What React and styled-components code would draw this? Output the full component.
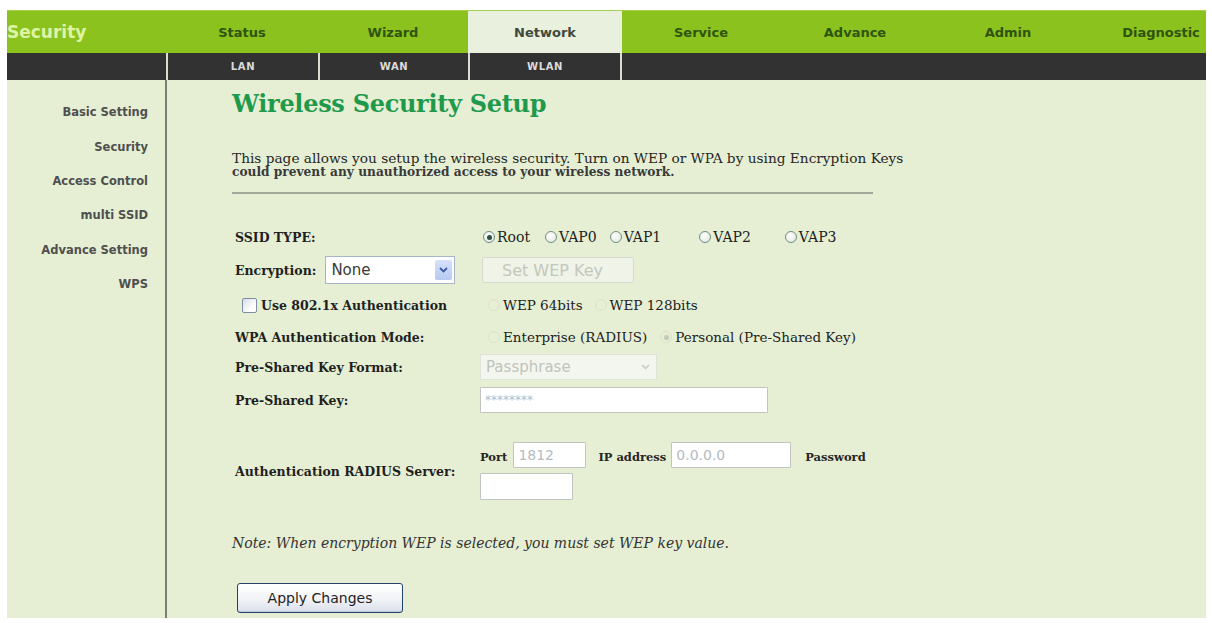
import React from 'react';
import styled, { createGlobalStyle } from 'styled-components';

const Global = createGlobalStyle`
  html, body { margin: 0; padding: 0; background: #ffffff; }
  body { font-family: "DejaVu Serif", serif; color: #222; }
  * { box-sizing: border-box; }
`;

const Page = styled.div`
  width: 1199px;
  margin: 10px 0 0 7px;
  overflow: hidden;
`;

const COLS = '159px 152px 150px 154px 158px 150px 156px 150px';

const TopNav = styled.div`
  display: grid;
  grid-template-columns: ${COLS};
  height: 43px;
  background: #8cc21d;
  border-top: 1px solid #a6d04e;
`;

const Logo = styled.div`
  display: flex;
  align-items: center;
  font-family: "DejaVu Sans", sans-serif;
  font-weight: bold;
  font-size: 17px;
  color: #def4a4;
`;

const NavTab = styled.div`
  display: flex;
  align-items: center;
  justify-content: center;
  font-family: "DejaVu Sans", sans-serif;
  font-weight: bold;
  font-size: 13px;
  color: ${p => (p.$active ? '#3f4a3c' : '#2f5410')};
  background: ${p => (p.$active ? '#e9f0dd' : 'transparent')};
  white-space: nowrap;
`;

const SubNav = styled.div`
  display: grid;
  grid-template-columns: 159px 152px 150px 152px 1fr;
  height: 27px;
  background: #323232;
`;

const SubTab = styled.div`
  display: flex;
  align-items: center;
  justify-content: center;
  border-left: ${p => (p.$first ? 'none' : '2px solid #d9ddd0')};
  font-family: "DejaVu Sans", sans-serif;
  font-weight: bold;
  font-size: 10px;
  letter-spacing: 0.6px;
  color: #dcdcdc;
`;

const Body = styled.div`
  display: flex;
  height: 538px;
  background: #e6efd4;
`;

const Sidebar = styled.nav`
  width: 160px;
  flex: none;
  border-right: 2px solid #7c7e74;
  padding: 15px 17px 0 0;
  display: flex;
  flex-direction: column;
  align-items: flex-end;
`;

const SideItem = styled.div`
  height: 34.4px;
  display: flex;
  align-items: center;
  font-family: "DejaVu Sans", sans-serif;
  font-weight: bold;
  font-size: 11.5px;
  color: #4f4f4f;
  white-space: nowrap;
`;

const Main = styled.main`
  flex: 1;
  padding: 10px 0 0 65px;
`;

const Title = styled.h1`
  margin: 0;
  font-family: "DejaVu Serif", serif;
  font-weight: bold;
  font-size: 24px;
  line-height: 28px;
  color: #1f9a4c;
  letter-spacing: -0.3px;
`;

const Intro = styled.p`
  margin: 33px 0 0;
  font-size: 13.7px;
  line-height: 14px;
  color: #262626;
  white-space: nowrap;
`;

const IntroSmall = styled.span`
  display: block;
  font-size: 12.2px;
  font-weight: bold;
  color: #3a3a3a;
`;

const Rule = styled.div`
  width: 641px;
  height: 2px;
  margin-top: 13px;
  background: #a2a797;
`;

const Form = styled.div`
  margin: 28px 0 0 3px;
`;

const Row = styled.div`
  display: grid;
  grid-template-columns: 245px 1fr;
  align-items: center;
  height: ${p => p.$h}px;
  margin-top: ${p => p.$mt || 0}px;
`;

const Label = styled.div`
  display: flex;
  align-items: center;
  font-weight: bold;
  font-size: 12.5px;
  color: #1f1f1f;
  white-space: nowrap;
  padding-left: ${p => p.$indent || 0}px;
`;

const Value = styled.div`
  display: flex;
  align-items: center;
  white-space: nowrap;
  padding-left: ${p => p.$pl || 0}px;
`;

const Choice = styled.label`
  display: inline-flex;
  align-items: center;
  gap: ${p => p.$gap ?? 2}px;
  margin-right: ${p => p.$mr || 0}px;
  font-size: ${p => p.$fs || 13.5}px;
  color: #222;
`;

const RadioDot = styled.span`
  width: 12px;
  height: 12px;
  border-radius: 50%;
  flex: none;
  display: inline-flex;
  align-items: center;
  justify-content: center;
  border: 1px solid ${p => (p.$disabled ? '#dae2cd' : '#6f8f84')};
  background: ${p => (p.$disabled ? 'transparent' : 'radial-gradient(circle at 40% 35%, #ffffff, #dce4dc)')};
  &::after {
    content: '';
    width: 5px;
    height: 5px;
    border-radius: 50%;
    background: ${p => (p.$checked ? (p.$disabled ? '#c3c8ba' : '#2d4f3d') : 'transparent')};
  }
`;

const CheckBox = styled.span`
  width: 15px;
  height: 15px;
  flex: none;
  border: 1px solid #7e8fa3;
  border-radius: 2px;
  background: linear-gradient(135deg, #d7dde6, #ffffff 70%);
  margin-right: 4px;
`;

const SelectBox = styled.div`
  display: flex;
  align-items: center;
  width: ${p => p.$w}px;
  height: ${p => p.$h}px;
  margin-left: ${p => p.$ml || 0}px;
  border: 1px solid ${p => (p.$disabled ? '#dfe4d8' : '#a7b6c6')};
  background: ${p => (p.$disabled ? '#f3f6ee' : '#ffffff')};
  padding: 0 2px 0 5px;
  font-family: "DejaVu Sans", sans-serif;
  font-weight: normal;
  font-size: 15px;
  color: ${p => (p.$disabled ? '#bfc4bb' : '#3a3a3a')};
`;

const SelectText = styled.span`
  flex: 1;
`;

const SelectArrow = styled.span`
  width: 17px;
  height: 20px;
  display: flex;
  align-items: center;
  justify-content: center;
  border-radius: 2px;
  background: ${p => (p.$disabled ? 'transparent' : 'linear-gradient(#d6e2fb, #b7c9f0)')};
`;

const GhostButton = styled.button`
  width: 152px;
  height: 26px;
  margin-left: 2px;
  border: 1px solid #d6dccd;
  border-radius: 2px;
  background: #eff3e8;
  font-family: "DejaVu Sans", sans-serif;
  font-size: 16px;
  color: #c3c8bc;
  text-align: left;
  padding: 0 0 0 19px;
`;

const TextBox = styled.input`
  width: ${p => p.$w}px;
  height: ${p => p.$h || 26}px;
  margin: 0 ${p => p.$mr || 0}px 0 ${p => p.$ml || 0}px;
  border: 1px solid #bfc6c0;
  border-radius: 1px;
  background: #ffffff;
  padding: 0 4px;
  font-family: "DejaVu Sans", sans-serif;
  font-size: ${p => p.$fs || 14}px;
  color: #b5bcc2;
  outline: none;
`;

const Radius = styled.div`
  display: flex;
  flex-direction: column;
  gap: 5px;
`;

const RadiusLine = styled.div`
  display: flex;
  align-items: center;
`;

const SmallLabel = styled.span`
  font-weight: bold;
  font-size: 11.5px;
  color: #262626;
  padding-top: 4px;
`;

const Note = styled.p`
  margin: 35px 0 0;
  font-style: italic;
  font-size: 14px;
  line-height: 16px;
  color: #333;
  white-space: nowrap;
`;

const ApplyButton = styled.button`
  display: block;
  margin: 32px 0 0 5px;
  width: 166px;
  height: 30px;
  border: 1px solid #23446a;
  border-radius: 3px;
  background: linear-gradient(#ffffff, #f1f3f7 55%, #d9dfe9);
  box-shadow: inset 0 -1px 0 #c3ccdb;
  font-family: "DejaVu Sans", sans-serif;
  font-size: 14px;
  color: #1f1f1f;
  padding: 0;
`;

const Chevron = ({ color }) => (
  <svg width="9" height="6" viewBox="0 0 9 6">
    <polyline points="1,1 4.5,4.5 8,1" fill="none" stroke={color} strokeWidth="1.8" />
  </svg>
);

const Radio = ({ label, checked, disabled, mr, gap, fs }) => (
  <Choice $mr={mr} $gap={gap} $fs={fs}>
    <RadioDot $checked={checked} $disabled={disabled} />
    {label}
  </Choice>
);

const navTabs = ['Status', 'Wizard', 'Network', 'Service', 'Advance', 'Admin', 'Diagnostic'];
const subTabs = ['LAN', 'WAN', 'WLAN'];
const sideItems = ['Basic Setting', 'Security', 'Access Control', 'multi SSID', 'Advance Setting', 'WPS'];
const ssidTypes = [
  { label: 'Root', mr: 15 },
  { label: 'VAP0', mr: 13 },
  { label: 'VAP1', mr: 38 },
  { label: 'VAP2', mr: 34 },
  { label: 'VAP3', mr: 0 },
];

export default function App() {
  return (
    <>
      <Global />
      <Page>
        <TopNav>
          <Logo>Security</Logo>
          {navTabs.map(t => (
            <NavTab key={t} $active={t === 'Network'}>{t}</NavTab>
          ))}
        </TopNav>
        <SubNav>
          <SubTab $first />
          {subTabs.map(t => (
            <SubTab key={t}>{t}</SubTab>
          ))}
          <SubTab />
        </SubNav>
        <Body>
          <Sidebar>
            {sideItems.map(s => (
              <SideItem key={s}>{s}</SideItem>
            ))}
          </Sidebar>
          <Main>
            <Title>Wireless Security Setup</Title>
            <Intro>
              This page allows you setup the wireless security. Turn on WEP or WPA by using Encryption Keys
              <IntroSmall>could prevent any unauthorized access to your wireless network.</IntroSmall>
            </Intro>
            <Rule />
            <Form>
              <Row $h={30}>
                <Label>SSID TYPE:</Label>
                <Value $pl={3}>
                  {ssidTypes.map((s, i) => (
                    <Radio key={s.label} label={s.label} checked={i === 0} mr={s.mr} fs={14} />
                  ))}
                </Value>
              </Row>
              <Row $h={36}>
                <Label>
                  Encryption:
                  <SelectBox $w={130} $h={28} $ml={9}>
                    <SelectText>None</SelectText>
                    <SelectArrow><Chevron color="#3b5aa8" /></SelectArrow>
                  </SelectBox>
                </Label>
                <Value>
                  <GhostButton disabled>Set WEP Key</GhostButton>
                </Value>
              </Row>
              <Row $h={34}>
                <Label $indent={7}>
                  <CheckBox />
                  Use 802.1x Authentication
                </Label>
                <Value $pl={8}>
                  <Radio label="WEP 64bits" disabled mr={12} gap={3} />
                  <Radio label="WEP 128bits" disabled gap={3} />
                </Value>
              </Row>
              <Row $h={30}>
                <Label>WPA Authentication Mode:</Label>
                <Value $pl={8}>
                  <Radio label="Enterprise (RADIUS)" disabled mr={13} gap={3} />
                  <Radio label="Personal (Pre-Shared Key)" checked disabled gap={3} />
                </Value>
              </Row>
              <Row $h={30}>
                <Label>Pre-Shared Key Format:</Label>
                <Value>
                  <SelectBox $w={177} $h={26} $disabled>
                    <SelectText>Passphrase</SelectText>
                    <SelectArrow $disabled><Chevron color="#cdd2c6" /></SelectArrow>
                  </SelectBox>
                </Value>
              </Row>
              <Row $h={36}>
                <Label>Pre-Shared Key:</Label>
                <Value>
                  <TextBox $w={288} $fs={12} readOnly value="********" />
                </Value>
              </Row>
              <Row $h={58} $mt={24}>
                <Label>Authentication RADIUS Server:</Label>
                <Radius>
                  <RadiusLine>
                    <SmallLabel>Port</SmallLabel>
                    <TextBox $w={73} $ml={6} $mr={12} readOnly value="1812" />
                    <SmallLabel>IP address</SmallLabel>
                    <TextBox $w={120} $ml={5} $mr={14} readOnly value="0.0.0.0" />
                    <SmallLabel>Password</SmallLabel>
                  </RadiusLine>
                  <RadiusLine>
                    <TextBox $w={93} $h={27} type="password" readOnly value="" />
                  </RadiusLine>
                </Radius>
              </Row>
            </Form>
            <Note>Note: When encryption WEP is selected, you must set WEP key value.</Note>
            <ApplyButton>Apply Changes</ApplyButton>
          </Main>
        </Body>
      </Page>
    </>
  );
}
